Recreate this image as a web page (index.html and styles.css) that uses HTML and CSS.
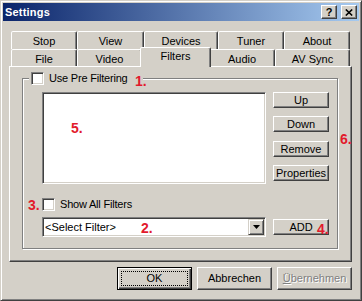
FILE: index.html
```html
<!DOCTYPE html>
<html>
<head>
<meta charset="utf-8">
<title>Settings</title>
<link rel="stylesheet" href="styles.css">
</head>
<body>
<div class="window">
  <div class="titlebar">
    <span class="title">Settings</span>
    <span class="capbtn help">?</span>
    <span class="capbtn close"><svg width="8" height="7" viewBox="0 0 8 7"><path d="M0.8 0.5 L7.2 6.5 M7.2 0.5 L0.8 6.5" stroke="#000" stroke-width="1.6" fill="none"/></svg></span>
  </div>
  <div class="client">
    <div class="tabctl">
      <div class="tabrow back">
        <div class="tab w66">Stop</div>
        <div class="tab w67">View</div>
        <div class="tab w74">Devices</div>
        <div class="tab w66">Tuner</div>
        <div class="tab w66">About</div>
      </div>
      <div class="tabrow front">
        <div class="tab w66">File</div>
        <div class="tab w65">Video</div>
        <div class="tab sel">Filters</div>
        <div class="tab w66">Audio</div>
        <div class="tab w75">AV Sync</div>
      </div>
      <div class="panel">
        <div class="group">
          <div class="legend"><span class="chk"></span><span class="lbl">Use Pre Filtering</span></div>
          <div class="listrow">
            <div class="listbox"></div>
            <div class="btncol">
              <div class="btn small">Up</div>
              <div class="btn small">Down</div>
              <div class="btn small remove">Remove</div>
              <div class="btn small">Properties</div>
            </div>
          </div>
          <div class="chkrow"><span class="chk"></span><span class="lbl">Show All Filters</span></div>
          <div class="comborow">
            <div class="combo">
              <span class="combotext">&lt;Select Filter&gt;</span>
              <span class="dropbtn"><svg width="7" height="4" viewBox="0 0 7 4"><polygon points="0,0 7,0 3.5,4" fill="#000"/></svg></span>
            </div>
            <div class="btn small add">ADD</div>
          </div>
        </div>
      </div>
    </div>
    <div class="dlgbtns">
      <div class="btn dlg default"><span class="focus">OK</span></div>
      <div class="btn dlg">Abbrechen</div>
      <div class="btn dlg disabled"><u>Ü</u>bernehmen</div>
    </div>
  </div>
  <span class="note n1">1.</span>
  <span class="note n5">5.</span>
  <span class="note n6">6.</span>
  <span class="note n3">3.</span>
  <span class="note n2">2.</span>
  <span class="note n4">4.</span>
</div>
</body>
</html>
```
FILE: styles.css
```css
* { box-sizing: border-box; }
html, body { margin: 0; padding: 0; }
body {
  background: #d4d0c8;
  font-family: "Liberation Sans", Arial, sans-serif;
  font-size: 11px;
  line-height: 13px;
  color: #000;
}
.window {
  position: relative;
  width: 362px;
  height: 301px;
  background: #d4d0c8;
  border: 1px solid;
  border-color: #d4d0c8 #404040 #404040 #d4d0c8;
  box-shadow: inset 1px 1px #fff, inset -1px -1px #808080;
  padding: 2px;
}
.titlebar {
  height: 18px;
  display: flex;
  align-items: center;
  padding: 0 2px;
  background: linear-gradient(to right, #0a246a, #a6caf0);
}
.title {
  flex: 1;
  color: #fff;
  font-weight: bold;
  font-size: 11px;
  letter-spacing: 0.2px;
}
.capbtn {
  width: 16px;
  height: 14px;
  background: #d4d0c8;
  border: 1px solid;
  border-color: #fff #404040 #404040 #fff;
  box-shadow: inset -1px -1px #808080;
  display: flex;
  align-items: center;
  justify-content: center;
}
.help {
  margin-right: 4px;
  font-weight: bold;
  font-size: 11px;
  line-height: 11px;
}
.client { padding-top: 10px; }
.tabctl { margin-left: 6px; width: 343px; }
.tabrow {
  display: flex;
  align-items: flex-start;
  padding: 0 2px;
}
.tabrow.back { height: 18px; }
.tabrow.front { height: 17px; }
.tab {
  background: #d4d0c8;
  border: 1px solid;
  border-bottom: none;
  border-color: #fff #404040 transparent #fff;
  border-radius: 2px 2px 0 0;
  box-shadow: inset -1px 0 #808080;
  display: flex;
  justify-content: center;
  padding-top: 3px;
  white-space: nowrap;
}
.back .tab { height: 18px; }
.front .tab { height: 17px; }
.w65 { width: 65px; }
.w66 { width: 66px; }
.w67 { width: 67px; }
.w74 { width: 74px; }
.w75 { width: 75px; }
.front .tab.sel {
  position: relative;
  z-index: 2;
  width: 71px;
  height: 20px;
  margin: -2px -2px -1px;
  padding-top: 2px;
}
.panel {
  height: 196px;
  border: 1px solid;
  border-color: #fff #404040 #404040 #fff;
  box-shadow: inset -1px -1px #808080;
  padding: 11px 0 0 12px;
}
.group {
  width: 316px;
  height: 171px;
  border: 1px solid #808080;
  box-shadow: inset 1px 1px #fff, 1px 1px #fff;
}
.legend {
  display: flex;
  align-items: center;
  gap: 5px;
  width: 114px;
  height: 13px;
  margin: -7px 0 0 6px;
  padding-left: 2px;
  background: #d4d0c8;
}
.chk {
  flex: none;
  width: 13px;
  height: 13px;
  background: #fff;
  border: 1px solid;
  border-color: #808080 #fff #fff #808080;
  box-shadow: inset 1px 1px #404040, inset -1px -1px #d4d0c8;
}
.lbl { white-space: nowrap; letter-spacing: -0.2px; }
.listrow {
  display: flex;
  margin: 7px 0 0 19px;
}
.listbox {
  width: 224px;
  height: 92px;
  background: #fff;
  border: 1px solid;
  border-color: #808080 #fff #fff #808080;
  box-shadow: inset 1px 1px #404040, inset -1px -1px #d4d0c8;
}
.btncol {
  display: flex;
  flex-direction: column;
  gap: 8px;
  width: 56px;
  margin-left: 7px;
}
.btn {
  background: #d4d0c8;
  border: 1px solid;
  border-color: #fff #404040 #404040 #fff;
  box-shadow: inset -1px -1px #808080;
  display: flex;
  align-items: center;
  justify-content: center;
  white-space: nowrap;
}
.btn.small { height: 16px; }
.btn.remove { margin-top: 1px; }
.chkrow {
  display: flex;
  align-items: center;
  gap: 5px;
  height: 13px;
  margin: 14px 0 0 19px;
}
.comborow {
  display: flex;
  align-items: center;
  gap: 7px;
  margin: 6px 0 0 19px;
}
.combo {
  width: 224px;
  height: 20px;
  background: #fff;
  border: 1px solid;
  border-color: #808080 #fff #fff #808080;
  box-shadow: inset 1px 1px #404040, inset -1px -1px #d4d0c8;
  padding: 1px 1px 1px 2px;
  display: flex;
  align-items: center;
}
.combotext { flex: 1; white-space: nowrap; }
.dropbtn {
  width: 16px;
  height: 16px;
  background: #d4d0c8;
  border: 1px solid;
  border-color: #d4d0c8 #404040 #404040 #d4d0c8;
  box-shadow: inset 1px 1px #fff, inset -1px -1px #808080;
  display: flex;
  align-items: center;
  justify-content: center;
}
.btn.add { width: 56px; }
.dlgbtns {
  display: flex;
  justify-content: flex-end;
  gap: 5px;
  margin-top: 5px;
  padding-right: 7px;
}
.btn.dlg { width: 75px; height: 23px; }
.btn.default {
  border-color: #000;
  box-shadow: inset 1px 1px #fff, inset -1px -1px #404040, inset -2px -2px #808080;
  padding: 3px;
  align-items: stretch;
}
.focus {
  flex: 1;
  border: 1px dotted #000;
  display: flex;
  align-items: center;
  justify-content: center;
}
.btn.disabled {
  color: #808080;
  text-shadow: 1px 1px #fff;
}
.note {
  position: absolute;
  color: #e21a2c;
  font-family: "Liberation Sans", Arial, sans-serif;
  font-weight: bold;
  font-size: 14px;
  line-height: 14px;
}
.n1 { left: 134px; top: 73px; }
.n5 { left: 70px; top: 120px; }
.n6 { left: 339px; top: 131px; }
.n3 { left: 27px; top: 197px; }
.n2 { left: 140px; top: 220px; }
.n4 { left: 316px; top: 221px; }
```
